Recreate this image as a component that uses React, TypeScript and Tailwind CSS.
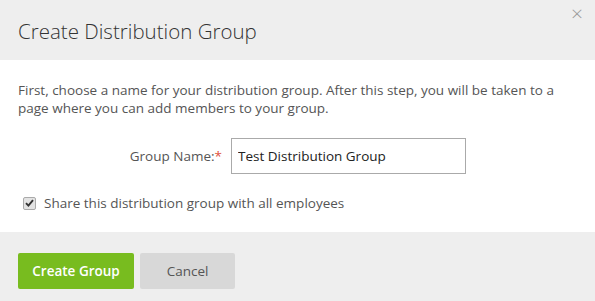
export default function App() {
  return (
    <div className="w-[595px] h-[301px] bg-white flex flex-col font-['Open_Sans',sans-serif] text-[#555]">
      {/* Header */}
      <div className="relative h-[60px] shrink-0 bg-[#eeeeee] px-[18px] flex items-center">
        <h1 className="text-[20.5px] font-light text-[#333] leading-none pt-[3px]">
          Create Distribution Group
        </h1>
        <button className="absolute right-[12px] top-[3px] text-[#999] text-[21px] font-light leading-none">
          ×
        </button>
      </div>

      {/* Body */}
      <div className="flex-1 px-[18px] pt-[21px]">
        <p className="text-[13.5px] leading-[18px] text-[#555]">
          First, choose a name for your distribution group. After this step, you will be taken to a page where you can add members to your group.
        </p>
        <div className="flex items-center mt-[21px]">
          <label className="w-[213px] text-right text-[13.5px] pr-[9px]">
            Group Name:<span className="text-[#e0503c]">*</span>
          </label>
          <input
            defaultValue="Test Distribution Group"
            className="w-[235px] h-[36px] border border-[#aaa] px-[6px] text-[13.5px] text-[#222] outline-none"
          />
        </div>
        <label className="flex items-center gap-[8px] mt-[19px] pl-[5px] text-[13.5px]">
          <span className="w-[13px] h-[13px] rounded-[2px] border border-[#aaa] bg-[#e3e3e3] flex items-center justify-center">
            <svg width="9" height="8" viewBox="0 0 9 8">
              <path d="M1 4.2 L3.4 6.6 L8 1.2" fill="none" stroke="#333" strokeWidth="1.9" />
            </svg>
          </span>
          Share this distribution group with all employees
        </label>
      </div>

      {/* Footer */}
      <div className="h-[69px] shrink-0 bg-[#eeeeee] px-[18px] pt-[21px] flex items-start gap-[6px]">
        <button className="w-[116px] h-[36px] rounded-[2px] bg-[#78bc1f] text-white text-[13.5px] font-semibold">
          Create Group
        </button>
        <button className="w-[95px] h-[36px] rounded-[2px] bg-[#d8d8d8] text-[#555] text-[13.5px]">
          Cancel
        </button>
      </div>
    </div>
  );
}
